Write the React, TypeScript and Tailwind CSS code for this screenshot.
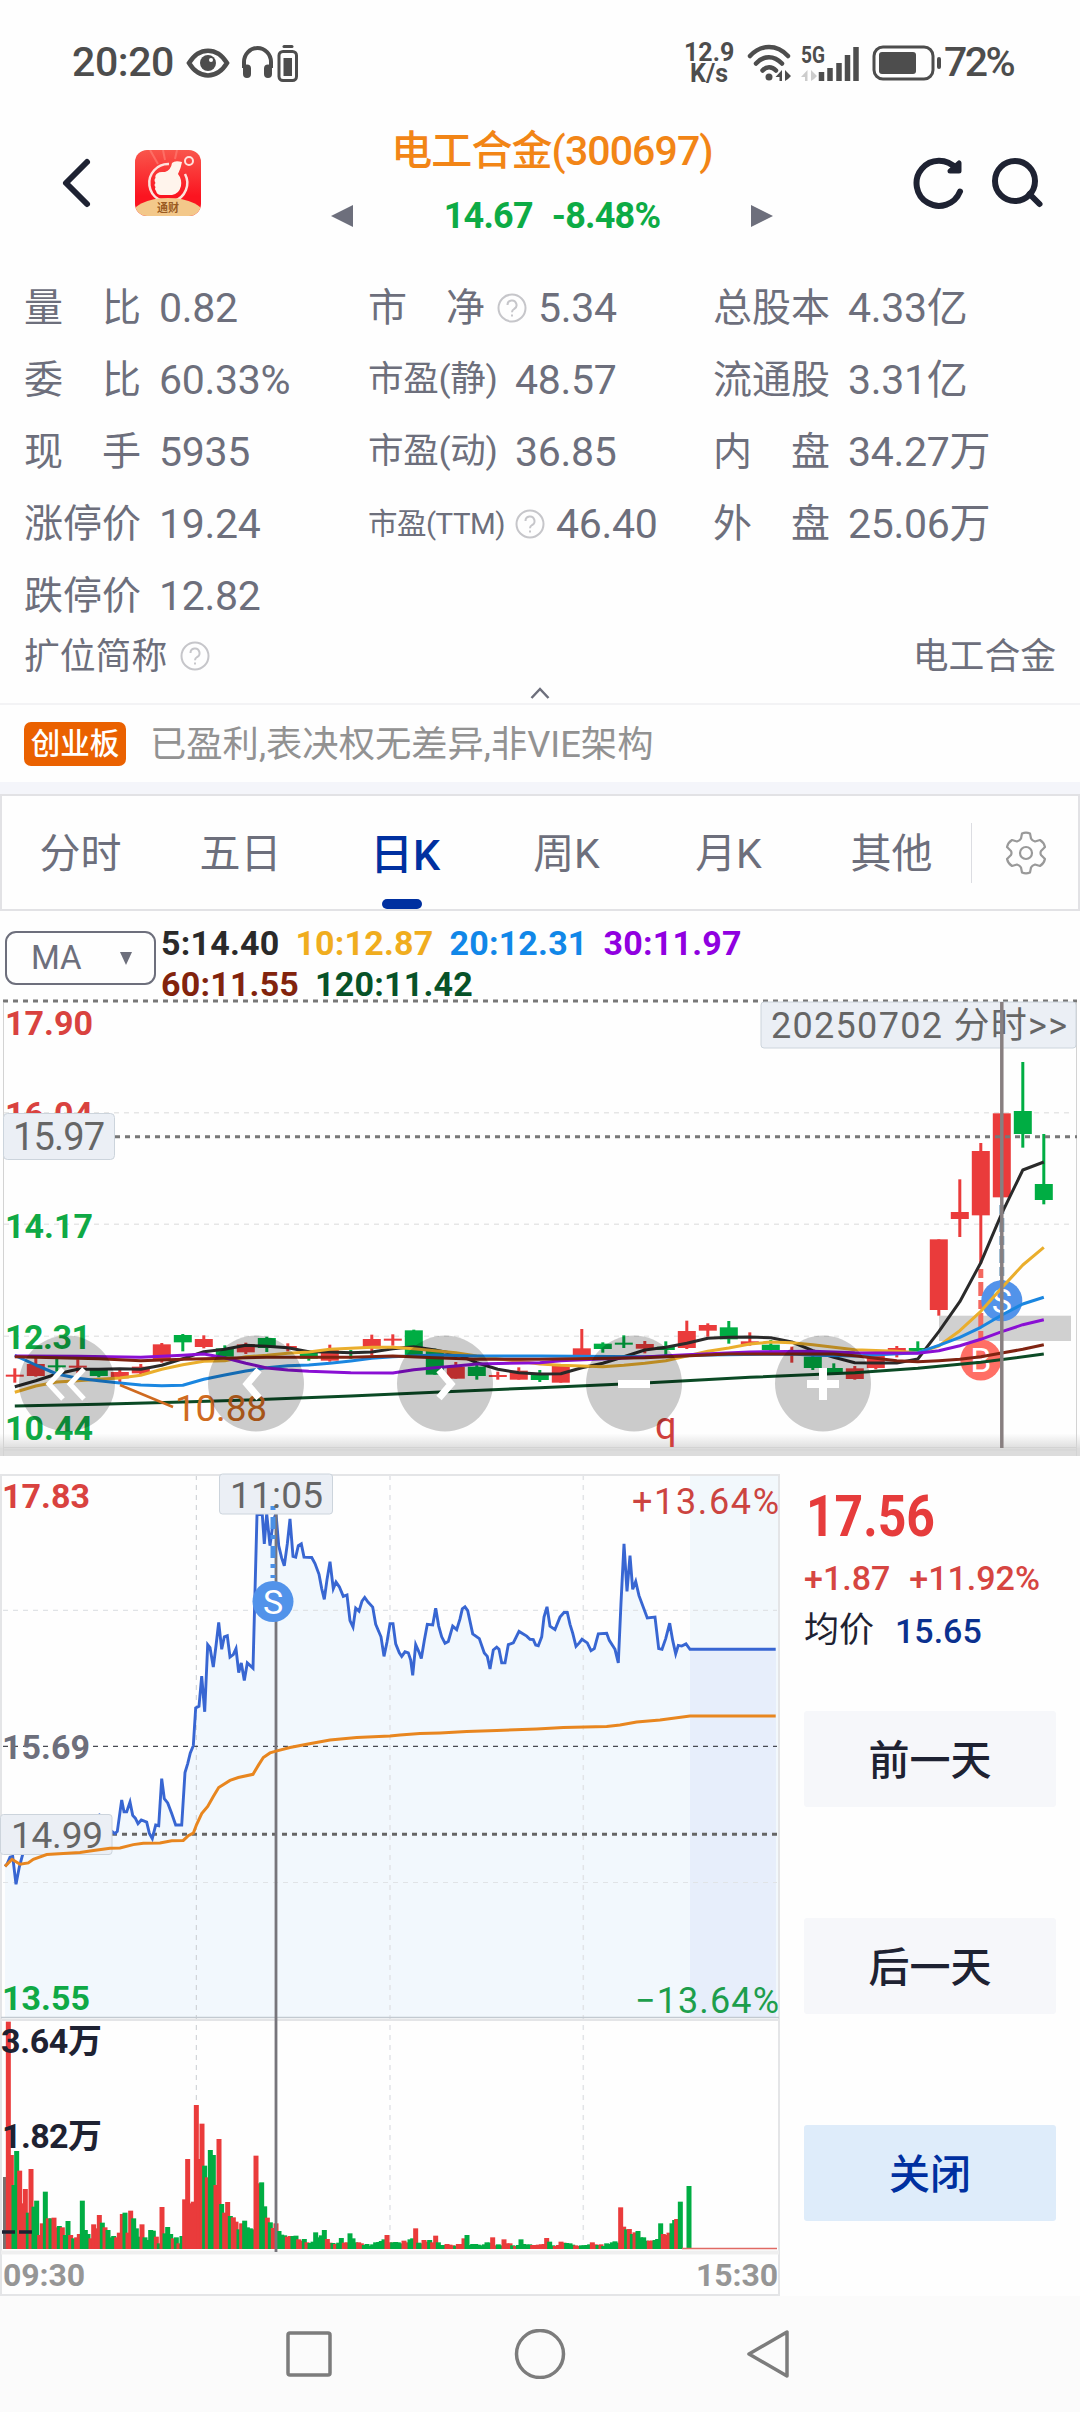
import type { ReactNode } from 'react'
import clsx from 'clsx'

const RED = '#ea3b3b'
const GREEN = '#00ad43'

interface StatItem {
  label: string
  value: string
  kind?: 'pe' | 'ttm'
  hint?: boolean
}

const stats: (StatItem | null)[] = [
  { label: '量比', value: '0.82' },
  { label: '市净', value: '5.34', hint: true },
  { label: '总股本', value: '4.33亿' },
  { label: '委比', value: '60.33%' },
  { label: '市盈(静)', value: '48.57', kind: 'pe' },
  { label: '流通股', value: '3.31亿' },
  { label: '现手', value: '5935' },
  { label: '市盈(动)', value: '36.85', kind: 'pe' },
  { label: '内盘', value: '34.27万' },
  { label: '涨停价', value: '19.24' },
  { label: '市盈(TTM)', value: '46.40', kind: 'ttm', hint: true },
  { label: '外盘', value: '25.06万' },
  { label: '跌停价', value: '12.82' },
  null,
  null,
]

const tabs = [
  { label: '分时', width: 'w-[157px]' },
  { label: '五日', width: 'w-[163px]' },
  { label: '日K', width: 'w-[166px]' },
  { label: '周K', width: 'w-[157px]' },
  { label: '月K', width: 'w-[167px]' },
  { label: '其他', width: 'w-[159px]' },
]

// Chart values are vertical positions, three units to a pixel.
// [colour, body top, body bottom, high, low]
type Candle = ['r' | 'g', number, number, number, number]

const candles: Candle[] = [
  ['r', 1154, 1160, 1135, 1178], ['r', 1122, 1158, 1100, 1160], ['g', 1126, 1132, 1106, 1145],
  ['r', 1127, 1133, 1108, 1150], ['g', 1140, 1158, 1138, 1162], ['r', 1146, 1165, 1140, 1180],
  ['r', 1130, 1150, 1122, 1152], ['r', 1063, 1108, 1059, 1118], ['g', 1035, 1057, 1032, 1084],
  ['r', 1047, 1071, 1036, 1075], ['g', 1075, 1100, 1066, 1104], ['r', 1063, 1087, 1058, 1092],
  ['g', 1044, 1074, 1040, 1086], ['r', 1068, 1074, 1060, 1084], ['g', 1085, 1106, 1080, 1112],
  ['r', 1080, 1112, 1064, 1115], ['g', 1085, 1092, 1080, 1106], ['r', 1047, 1075, 1034, 1096],
  ['r', 1046, 1052, 1033, 1067], ['g', 1021, 1095, 1019, 1095], ['g', 1080, 1154, 1076, 1154],
  ['r', 1130, 1166, 1116, 1166], ['g', 1130, 1158, 1124, 1169], ['r', 1155, 1161, 1145, 1169],
  ['r', 1142, 1169, 1132, 1169], ['g', 1155, 1170, 1140, 1176], ['r', 1128, 1178, 1128, 1178],
  ['r', 1075, 1100, 1017, 1100], ['g', 1061, 1077, 1057, 1088], ['g', 1058, 1064, 1036, 1074],
  ['r', 1062, 1076, 1053, 1090], ['g', 1070, 1080, 1054, 1095], ['r', 1023, 1074, 992, 1077],
  ['r', 1005, 1022, 1000, 1040], ['g', 1012, 1048, 993, 1061], ['r', 1054, 1062, 1027, 1067],
  ['g', 1064, 1080, 1050, 1082], ['r', 1086, 1094, 1070, 1118], ['g', 1100, 1134, 1095, 1140],
  ['g', 1134, 1152, 1120, 1155], ['r', 1135, 1167, 1128, 1169], ['r', 1088, 1134, 1088, 1138],
  ['r', 1074, 1084, 1068, 1102], ['g', 1074, 1084, 1054, 1090], ['r', 748, 960, 748, 977],
  ['r', 666, 687, 568, 741], ['r', 483, 676, 459, 820], ['r', 370, 622, 370, 622],
  ['g', 363, 432, 216, 473], ['g', 582, 630, 432, 643],
]

// candle index, position
const averages: { color: string; points: number[] }[] = [
  { color: '#2a2a2a', points: [0, 1190, 1, 1172, 2, 1152, 3, 1138, 4, 1138, 5, 1136, 6, 1138, 7, 1126, 8, 1106, 9, 1085, 10, 1078, 11, 1066, 12, 1069, 13, 1073, 14, 1085, 15, 1086, 16, 1088, 17, 1086, 18, 1076, 19, 1070, 20, 1080, 21, 1092, 22, 1118, 23, 1138, 24, 1148, 25, 1152, 26, 1151, 27, 1133, 28, 1120, 29, 1100, 30, 1080, 31, 1072, 32, 1060, 33, 1045, 34, 1042, 35, 1041, 36, 1043, 37, 1056, 38, 1082, 39, 1102, 40, 1118, 41, 1119, 42, 1119, 43, 1107, 44, 1025, 45, 935, 46, 818, 47, 670, 48, 540, 49, 516] },
  { color: '#eaae2c', points: [0, 1207, 1, 1188, 2, 1176, 3, 1172, 4, 1168, 5, 1164, 6, 1156, 7, 1138, 8, 1124, 9, 1114, 10, 1112, 11, 1100, 12, 1096, 13, 1090, 14, 1086, 15, 1078, 16, 1075, 17, 1072, 18, 1072, 19, 1076, 20, 1082, 21, 1088, 22, 1098, 23, 1106, 24, 1114, 25, 1122, 26, 1126, 28, 1130, 29, 1126, 30, 1120, 31, 1112, 32, 1098, 33, 1084, 34, 1074, 35, 1062, 36, 1056, 37, 1058, 38, 1064, 39, 1072, 40, 1079, 42, 1084, 43, 1088, 44, 1068, 45, 1022, 46, 964, 47, 893, 48, 825, 49, 772] },
  { color: '#1a86e0', points: [0, 1096, 1, 1125, 2, 1152, 3, 1165, 4, 1172, 5, 1179, 6, 1185, 7, 1187, 8, 1186, 9, 1168, 10, 1155, 11, 1143, 12, 1133, 13, 1127, 14, 1125, 15, 1120, 16, 1113, 17, 1105, 18, 1100, 20, 1095, 22, 1098, 25, 1098, 30, 1100, 33, 1095, 37, 1092, 38, 1096, 40, 1098, 43, 1088, 44, 1066, 45, 1042, 46, 1012, 47, 975, 48, 942, 49, 922] },
  { color: '#8a0fd4', points: [0, 1098, 3, 1099, 6, 1102, 8, 1096, 9, 1092, 10, 1103, 11, 1120, 12, 1134, 13, 1140, 14, 1144, 16, 1148, 18, 1149, 19, 1139, 20, 1133, 21, 1128, 22, 1122, 25, 1118, 26, 1112, 29, 1104, 32, 1094, 35, 1086, 38, 1084, 40, 1088, 43, 1090, 44, 1082, 45, 1067, 46, 1048, 47, 1025, 48, 1004, 49, 989] },
  { color: '#7f2311', points: [0, 1100, 4, 1106, 6, 1112, 8, 1108, 12, 1102, 16, 1102, 18, 1098, 20, 1103, 22, 1108, 25, 1108, 30, 1103, 34, 1092, 39, 1092, 40, 1097, 41, 1105, 42, 1112, 43, 1115, 44, 1112, 45, 1108, 46, 1100, 47, 1089, 48, 1078, 49, 1064] },
  { color: '#0b4a25', points: [0, 1248, 4, 1243, 8, 1236, 12, 1228, 16, 1218, 20, 1207, 25, 1193, 30, 1179, 35, 1162, 40, 1148, 43, 1135, 46, 1117, 49, 1092] },
]

const price = [
  15, 1138, 22, 1130, 30, 1112, 38, 1110, 48, 1188, 58, 1140, 68, 1104, 90, 1070, 130, 1050, 200, 1030, 298, 994, 320, 1030, 336, 1040, 345, 1046, 352, 1040, 358, 1000, 365, 952, 372, 985, 380, 985, 390, 958, 398, 995, 406, 1003, 414, 1018, 424, 1008, 440, 1014, 448, 1045, 457, 1060, 467, 1022, 476, 1024, 485, 892, 493, 948, 503, 960, 515, 990, 527, 1022, 545, 1022, 555, 875, 563, 850, 571, 820, 580, 800, 587, 694, 597, 690, 605, 605, 614, 705, 623, 517, 630, 525, 640, 580, 648, 520, 656, 455, 665, 530, 673, 495, 682, 492, 690, 552, 700, 545, 708, 528, 716, 595, 724, 568, 733, 617, 742, 568, 750, 575, 759, 583, 764, 400, 771, 153, 787, 153, 793, 235, 800, 150, 810, 240, 820, 170, 828, 150, 836, 240, 845, 275, 853, 296, 862, 235, 870, 165, 879, 270, 887, 272, 895, 240, 904, 235, 912, 272, 935, 273, 945, 290, 957, 320, 965, 360, 973, 390, 981, 335, 990, 285, 1000, 360, 1008, 342, 1018, 355, 1030, 382, 1041, 378, 1050, 450, 1059, 468, 1067, 415, 1077, 423, 1086, 395, 1094, 385, 1104, 398, 1118, 412, 1127, 460, 1143, 495, 1152, 550, 1161, 510, 1170, 458, 1179, 458, 1187, 515,
  1198, 540, 1205, 550, 1215, 537, 1225, 540, 1232, 560, 1238, 603, 1247, 517, 1257, 538, 1264, 556, 1273, 505, 1282, 460, 1298, 462, 1307, 415, 1316, 465, 1325, 495, 1335, 513, 1345, 508, 1358, 465, 1370, 475, 1380, 445, 1387, 417, 1395, 411, 1403, 422, 1418, 487, 1438, 500, 1453, 540, 1462, 550, 1470, 585, 1480, 532, 1490, 524, 1497, 530, 1505, 568, 1515, 568, 1525, 517, 1540, 512, 1557, 480, 1580, 493, 1590, 502, 1600, 503, 1607, 518, 1615, 520, 1625, 495, 1632, 440, 1641, 411, 1650, 465, 1665, 475, 1680, 440, 1692, 427, 1702, 427, 1710, 460, 1718, 485, 1728, 522, 1738, 512, 1746, 502, 1762, 512, 1773, 534, 1783, 528, 1795, 487, 1820, 485, 1828, 505, 1845, 530, 1855, 568, 1863, 400, 1872, 235, 1881, 368, 1890, 268, 1898, 362, 1907, 340, 1917, 380, 1942, 442, 1965, 440, 1976, 528, 1986, 530, 1997, 500, 2009, 457, 2018, 505, 2027, 543, 2035, 519, 2045, 521, 2058, 515, 2070, 530, 2327, 530,
]

const average = [
  15, 1138, 36, 1118, 60, 1132, 85, 1128, 100, 1118, 140, 1105, 190, 1102, 240, 1099, 270, 1095, 330, 1087, 360, 1086, 400, 1077, 430, 1073, 480, 1072, 515, 1066, 550, 1065, 565, 1052, 580, 1045, 590, 1020, 605, 990, 623, 970, 640, 942, 656, 917, 690, 897, 715, 889, 759, 880, 775, 855, 790, 833, 810, 820, 828, 815, 870, 805, 920, 796, 990, 784, 1070, 777, 1170, 773, 1200, 770, 1260, 766, 1320, 764, 1400, 760, 1490, 757, 1610, 753, 1690, 749, 1820, 746, 1860, 742, 1910, 734, 1980, 728, 2070, 717, 2327, 717,
]

// Minute volumes: x, bar height, then r for a rising and g for a falling minute
const volume =
  '25,682r 34,282r 42,192g 50,294g 59,235r 68,137r 76,180r 85,109g 93,240r 102,127g 110,145g 119,42r 127,77r 136,172g 145,92r 153,92g 162,94r 170,65r 178,69g 187,65r 196,42g 204,84g 212,42r 221,32g 230,35r 238,45r 247,145g 256,57g 264,45g 273,32r 281,74r 290,62r 298,102r 307,79g 315,65r 324,57g 333,35g 341,39g 350,35r 358,49r 367,105r 375,109g 384,49r 392,115r 401,92g 409,62g 418,37g 426,74r 435,35g 444,27g 452,57g 460,55g 469,37r 478,17g 486,126r 495,47g 503,66g 512,45g 520,32r 529,35g 537,17r 546,39g 554,149r 563,270r 571,137r 580,142r 589,432r 597,270r 606,376r 614,250g 622,215r 631,297g 640,282g 648,192r 657,330r 665,135g 674,109r 683,141r 691,99g 700,95r 708,82r 717,59g 725,77r 734,85g 742,65g 751,62g 760,59g 768,280r 777,197r 785,200g 794,128g 802,94r 811,80g 820,63r 828,77r 837,54g 845,43g 854,41g 862,37r 871,39r 879,39g 888,40g 896,29r 905,25r 913,30g 921,20r 930,18g 939,22g 947,50g 956,35g 964,41g 973,57g 982,30r 990,19r 999,18g 1007,15r 1016,19g 1024,33g 1033,19r 1041,20r 1050,47g 1059,32g 1067,20g 1076,20r 1084,17r 1093,12g 1101,15g 1110,10g 1118,14g 1127,20g 1136,21g 1144,24g 1152,29g 1161,42r 1170,20r 1178,20g 1187,21g 1195,20g 1204,17g 1212,25r 1221,20r 1230,29g 1238,32g 1247,62r 1256,19g 1264,17g 1272,27r 1281,22r 1289,27g 1298,20r 1307,40r 1315,20g 1324,12g 1332,12g 1341,15r 1350,13r 1358,11r 1367,10g 1375,15r 1384,15r 1392,32r 1401,42g 1410,12g 1418,15g 1427,15g 1435,13g 1444,11g 1453,14g 1461,20g 1470,19g 1478,35r 1487,11r 1495,14g 1504,11g 1512,29r 1521,17r 1530,17r 1538,11g 1547,9r 1555,12g 1563,29g 1572,15g 1580,13g 1589,14g 1598,12r 1606,12r 1615,13r 1624,14r 1632,15r 1640,33r 1649,22g 1658,11g 1666,9r 1675,12r 1683,22r 1692,19r 1700,18g 1710,17g 1718,13g 1727,11r 1735,9r 1744,11g 1752,11g 1760,12g 1769,14g 1777,20r 1786,14r 1794,12g 1803,14r 1811,9g 1820,17g 1828,15g 1837,20g 1845,23g 1854,19g 1862,125r 1871,67r 1880,59g 1888,60r 1897,45g 1905,50r 1914,54g 1922,35g 1931,35g 1939,25g 1948,25r 1957,25r 1965,27g 1973,30g 1982,77g 1990,45r 1999,42r 2007,49r 2016,77g 2024,87g 2030,90r 2041,142g 2067,189g'
    .split(' ')
    .map((entry) => {
      const [x, h] = entry.slice(0, -1).split(',').map(Number)
      return { x: x / 3, h: h / 3, color: entry.endsWith('r') ? RED : GREEN }
    })

const candleX = (i: number) => 14.8 + i * 21

function toPath(values: number[], x: (v: number) => number, y: (v: number) => number) {
  const parts: string[] = []
  for (let i = 0; i < values.length; i += 2) {
    parts.push(`${x(values[i]).toFixed(1)},${y(values[i + 1]).toFixed(1)}`)
  }
  return 'M' + parts.join('L')
}

interface LabelProps {
  x: number
  y: number
  width: number
  fill: string
  size?: number
  weight?: number
  children: ReactNode
}

function Label({ x, y, width, fill, size = 34, weight = 700, children }: LabelProps) {
  return (
    <text x={x} y={y} fill={fill} fontSize={size} fontWeight={weight} textLength={width}>
      {children}
    </text>
  )
}

function HintIcon() {
  return (
    <svg width="30" height="30" viewBox="0 0 30 30" fill="none" stroke="#c6c6ca" strokeWidth="2" className="shrink-0">
      <circle cx="15" cy="15" r="13.5" />
      <path d="M10.500 12a4.500 4.500 0 1 1 6.600 4c-1.600 1-2.100 1.600-2.100 3.200" />
      <path d="M15 21.500v2" />
    </svg>
  )
}

function Stat({ label, value, kind, hint }: StatItem) {
  return (
    <div className="flex h-[72px] items-center">
      {kind ? (
        <span
          className={clsx(
            'whitespace-nowrap',
            kind === 'pe' ? 'w-[147px] text-[35.500px] tracking-[-0.300px]' : 'w-[147px] text-[29.500px] tracking-[-0.500px]',
          )}
        >
          {label}
        </span>
      ) : (
        <span className={clsx('flex w-[117px] justify-between text-[39px]', !hint && 'mr-[18px]')}>
          {label.split('').map((char) => (
            <span key={char}>{char}</span>
          ))}
        </span>
      )}
      {hint && (
        <span className={kind ? 'mr-[11px]' : 'mr-[11px] ml-[12px]'}>
          <HintIcon />
        </span>
      )}
      <span className="pt-[2px] text-[41px] tracking-[-0.300px] whitespace-nowrap">{value}</span>
    </div>
  )
}

function StatusBar() {
  return (
    <div className="flex h-[126px] items-start justify-between pt-[38px] pr-[65px] pl-[72px] text-[#4d4d4d]">
      <div className="flex h-[50px] items-center">
        <span className="w-[114px] text-[41px] font-medium tracking-[-0.400px]">20:20</span>
        <svg width="44" height="30" viewBox="0 0 44 30" className="mr-[10px]">
          <path d="M3 15C13-1.500 31-1.500 41 15C31 31.500 13 31.500 3 15Z" fill="none" stroke="currentColor" strokeWidth="4.500" />
          <circle cx="22" cy="15" r="8" fill="currentColor" />
          <circle cx="25" cy="12" r="2" fill="#fff" />
        </svg>
        <svg width="58" height="38" viewBox="0 0 58 38" fill="none" stroke="currentColor">
          <path d="M4 24V18a13.500 14 0 0 1 27 0v6" strokeWidth="4" />
          <path d="M7 24.500v5.500M28 24.500v5.500" strokeWidth="8" strokeLinecap="round" />
          <rect x="39" y="7.500" width="17.500" height="29" rx="4" strokeWidth="3" />
          <path d="M44 2.500h8" strokeWidth="3" strokeLinecap="round" />
          <path d="M43.500 14h8.500v18h-8.500z" fill="currentColor" stroke="none" />
        </svg>
      </div>
      <div className="flex h-[50px] items-center">
        <div className="mr-[13px] w-[50px] text-center text-[25px] leading-[21px] font-bold">
          <div>12.9</div>
          <div>K/s</div>
        </div>
        <svg width="112" height="38" viewBox="746 43 112 38" fill="none" stroke="currentColor">
          <path d="M749 55C760 43 776 43 787 55M755 62.500C763 54 773 54 781 62.500M761.500 69.500C765 65 771 65 775 69.500" strokeWidth="4.500" strokeLinecap="round" />
          <circle cx="768" cy="76" r="3.500" fill="currentColor" stroke="none" />
          <path d="M781 69v11h-2.500v-4h-4zM784 80V69l6 6-3 3z" fill="currentColor" stroke="none" />
          <text x="800" y="62" fontSize="23" fontWeight="700" textLength="24" lengthAdjust="spacingAndGlyphs" fill="currentColor" stroke="none">5G</text>
          <path d="M806.500 69v11h-2.500v-4h-4zM810 80V69l6 6-3 3z" fill="#ccc" stroke="none" />
          <path d="M820.500 80v-9M829 80V67M838 80V62M846.500 80V54M855 80V46" strokeWidth="5.500" />
        </svg>
        <svg width="72" height="36" viewBox="871 44 72 36" fill="none" stroke="currentColor" className="ml-[13px]">
          <rect x="873" y="46" width="59" height="32" rx="9" strokeWidth="3" />
          <rect x="878" y="51" width="37" height="22" rx="3" fill="currentColor" stroke="none" />
          <path d="M938 58v8" strokeWidth="4" strokeLinecap="round" />
        </svg>
        <span className="w-[71px] text-[41px] font-medium tracking-[-2.500px]">72%</span>
      </div>
    </div>
  )
}

function AppLogo() {
  return (
    <svg width="66" height="66" viewBox="0 0 66 66">
      <defs>
        <linearGradient id="logoRed" x1="0" y1="0" x2="0" y2="1">
          <stop offset="0" stopColor="#f9564c" />
          <stop offset="0.700" stopColor="#fb1420" />
        </linearGradient>
        <clipPath id="logoClip">
          <rect width="66" height="66" rx="12" />
        </clipPath>
      </defs>
      <g clipPath="url(#logoClip)">
        <rect width="66" height="66" fill="url(#logoRed)" />
        <path d="M15 0l8 14M28 0l2 10M42 0l-2 9" stroke="#ff8378" strokeWidth="2" opacity="0.600" />
        <path d="M34 14A19 19 0 1 0 50 24" fill="none" stroke="#fde3dd" strokeWidth="2.500" />
        <ellipse cx="33" cy="66" rx="37" ry="18" fill="#f3c88a" />
        <path d="M23 23q1-1 4-1h3q6-2 7-9q3-3 10-1q-1 6-4 12q4 5 3 12q-2 8-9 9h-11q-4 0-5-4q-2-2-.500-4q-2-2 0-4q-2-3 0-5q-1-3 2.500-5z" fill="#fff4ec" />
        <circle cx="54" cy="11" r="4" fill="none" stroke="#ffe1dc" strokeWidth="2" />
        <text x="22" y="62" fontSize="11" fontWeight="700" fill="#9a5b22">通财</text>
      </g>
    </svg>
  )
}

function Header() {
  return (
    <header className="flex h-[146px] items-start pl-[61px] text-[#1e2232]">
      <svg width="32" height="54" viewBox="0 0 32 54" fill="none" stroke="currentColor" strokeWidth="6" strokeLinecap="round" strokeLinejoin="round" className="mt-[30px] mr-[42px]">
        <path d="M26 6L5 27l21 21" />
      </svg>
      <div className="mt-[24px]">
        <AppLogo />
      </div>
      <div className="ml-[119px] flex w-[464px] flex-col items-center">
        <h1 className="h-[56px] text-[41px] leading-[50px] font-medium tracking-[-0.900px] whitespace-nowrap text-[#f28516]">电工合金(300697)</h1>
        <div className="flex h-[64px] w-[442px] items-center justify-between text-[#6d6f7c]">
          <svg width="22" height="22" viewBox="0 0 22 22" fill="currentColor" className="mt-[4px]">
            <path d="M22 0v22L0 11z" />
          </svg>
          <p className="mt-[3px] flex gap-[19px] text-[36px] font-bold tracking-[-0.800px] text-[#0dab45]">
            <span>14.67</span>
            <span>-8.48%</span>
          </p>
          <svg width="22" height="22" viewBox="0 0 22 22" fill="currentColor" className="mt-[4px]">
            <path d="M0 0v22l22-11z" />
          </svg>
        </div>
      </div>
      <svg width="132" height="54" viewBox="912 156 132 54" fill="none" stroke="currentColor" strokeWidth="6" strokeLinecap="round" strokeLinejoin="round" className="mt-[30px] ml-[128px]">
        <path d="M960 191.500A22.500 22.500 0 1 1 956 168.500" />
        <path d="M959 163v8h-9z" fill="currentColor" strokeWidth="5" />
        <circle cx="1015" cy="181" r="20" />
        <path d="M1029.500 194l10 10" />
      </svg>
    </header>
  )
}

const gearPath =
  'M18 2.500q4-1.800 8 0l1 5q1 2 4 3l5-1.500q4 2.500 5 7l-4 4q-1 2 0 4l4 4q-1 4.500-5 7l-5-1.500q-3 1-4 3l-1 5q-4 1.800-8 0l-1-5q-1-2-4-3l-5 1.500q-4-2.500-5-7l4-4q1-2 0-4l-4-4q1-4.500 5-7l5 1.500q3-1 4-3z'

function PeriodTabs() {
  return (
    <nav className="flex h-[117px] items-center border-2 border-[#e2e2e5] text-[#6d6f7c]">
      {tabs.map((tab) => (
        <button
          key={tab.label}
          className={clsx(
            'relative flex h-full items-center justify-center pt-[5px] text-[41px]',
            tab.width,
            tab.label === '日K' && 'text-[43px] font-medium text-[#0030a0]',
          )}
        >
          {tab.label}
          {tab.label === '日K' && (
            <span className="absolute bottom-0 left-[60px] h-[10px] w-[40px] rounded-full bg-[#0030a0]" />
          )}
        </button>
      ))}
      <span className="h-[60px] w-px bg-[#dcdde2]" />
      <svg width="44" height="44" viewBox="0 0 44 44" fill="none" stroke="#999" strokeWidth="2.200" strokeLinejoin="round" className="ml-[32px]">
        <path d={gearPath} />
        <circle cx="22" cy="22" r="6" />
      </svg>
    </nav>
  )
}

function AverageLegend() {
  return (
    <div className="flex h-[79px] items-start pl-[5px]">
      <button className="mt-[20px] flex h-[54px] w-[151px] items-center justify-between rounded-[11px] border-2 border-[#6d6f7c] pr-[22px] pl-[24px] text-[33px] text-[#6d6f7c]">
        MA
        <svg width="12" height="13" viewBox="0 0 12 13" fill="currentColor">
          <path d="M0 0h12L6 13z" />
        </svg>
      </button>
      <div className="mt-[12px] ml-[5px] text-[34px] leading-[41px] font-bold tracking-[0.200px]">
        <div className="flex gap-[16px]">
          <span className="text-[#2a2a2a]">5:14.40</span>
          <span className="text-[#f0ad1e]">10:12.87</span>
          <span className="text-[#1187e8]">20:12.31</span>
          <span className="text-[#9000e0]">30:11.97</span>
        </div>
        <div className="flex gap-[16px]">
          <span className="text-[#82230d]">60:11.55</span>
          <span className="text-[#075228]">120:11.42</span>
        </div>
      </div>
    </div>
  )
}

function TradeMark({ x, y, color, children }: { x: number; y: number; color: string; children: ReactNode }) {
  return (
    <>
      <circle cx={x} cy={y} r="20.500" fill={color} />
      <text x={x} y={y + 12} textAnchor="middle" fontSize="34" fill="#fff">
        {children}
      </text>
    </>
  )
}

function CandleChart() {
  const y = (v: number) => v / 3 - 1

  return (
    <svg width="1080" height="466" viewBox="0 -1 1080 466" className="block">
      <defs>
        <linearGradient id="fade" x1="0" y1="0" x2="0" y2="1">
          <stop offset="0" stopColor="#fff" />
          <stop offset="1" stopColor="#dedede" />
        </linearGradient>
      </defs>
      <rect x="0" y="442" width="1080" height="15" fill="url(#fade)" />
      <rect x="0" y="457" width="1080" height="8" fill="#dcdcdc" />
      <path d="M3.500 12V465M1076.500 12V465M3 456.500H1077M3 459H1077" stroke="#d3d3d3" strokeWidth="1" fill="none" />
      <path d="M4 121.700H1072M4 233.300H1072M4 345.300H1072" stroke="#e6e6e6" strokeWidth="1.500" strokeDasharray="5 5" />
      <rect x="939" y="324.700" width="132" height="25.300" fill="#d0d0d0" />

      <Label x={5} y={43.500} width={88} fill="#d9423f">17.90</Label>
      <Label x={5} y={134.500} width={88} fill="#d9423f">16.04</Label>
      <Label x={5} y={246.500} width={88} fill="#0fa945">14.17</Label>
      <Label x={5} y={357.500} width={86} fill="#0fa945">12.31</Label>
      <Label x={5} y={448.500} width={88} fill="#0fa945">10.44</Label>

      {candles.map(([color, top, bottom, high, low], i) => (
        <g key={i} fill={color === 'r' ? RED : GREEN}>
          <rect x={candleX(i) - 1.500} y={y(high)} width="3" height={(low - high) / 3} />
          <rect x={candleX(i) - 9} y={y(top)} width="18" height={(bottom - top) / 3} />
        </g>
      ))}

      <path d="M980.800 278V350" stroke="#f4685f" strokeWidth="5" strokeDasharray="9 4 14 4" />
      <path d="M1001.800 214V290" stroke="#79a0bd" strokeWidth="5" strokeDasharray="9 4 14 4" />
      <TradeMark x={980.800} y={369} color="#ff6f65">B</TradeMark>
      <TradeMark x={1001.800} y={309.700} color="#5293ea">S</TradeMark>

      {averages.map((line) => (
        <path key={line.color} d={toPath(line.points, candleX, y)} fill="none" stroke={line.color} strokeWidth="3" strokeLinejoin="round" />
      ))}

      <path d="M120 394L173 416" stroke="#cf6a20" strokeWidth="2.500" />
      <Label x={175} y={430} width={92} size={37} weight={400} fill="#cf6a20">10.88</Label>
      <text x="655" y="448" fontSize="38" fill="#cf3f3c">q</text>

      {/* pan and zoom controls */}
      {[67, 256, 445, 634, 823].map((cx) => (
        <circle key={cx} cx={cx} cy="392.500" r="48" fill="#000" fillOpacity="0.200" />
      ))}
      <g fill="none" stroke="#fff" strokeWidth="5">
        <path d="M63 378L49 393l14 15M84 378L70 393l14 15" />
        <path d="M259 379L247 393l12 14M439 379l12 14-12 14" strokeWidth="7" />
        <path d="M618 393h32M807 393h32M823 377v32" strokeWidth="8" />
      </g>

      <path d="M3 10H1077M115 145.700H1077" stroke="#777" strokeWidth="3" strokeDasharray="5 5" />
      <rect x="761" y="11" width="315" height="46" rx="3" fill="#ebeff5" stroke="#ccd4dc" />
      <Label x={771} y={46.500} width={296} size={36} weight={400} fill="#666">{'20250702 分时>>'}</Label>
      <rect x="3.500" y="122.500" width="111" height="46" rx="4" fill="#ebeff5" stroke="#ccd4dc" />
      <Label x={13} y={159} width={92} size={38} weight={400} fill="#666">15.97</Label>
      <path d="M1001.800 11V457" stroke="#887f80" strokeWidth="3.500" />
    </svg>
  )
}

function MinuteChart() {
  const x = (v: number) => v / 3
  const y = (v: number) => v / 2.8 + 4
  const line = toPath(price, x, y)

  return (
    <svg width="780" height="840" viewBox="0 0 780 840" className="block shrink-0">
      <rect x="690" y="19" width="89" height="543" fill="#f2f8fc" />
      <path d={`${line}V561H5Z`} fill="#f2f8fd" />
      <rect x="690" y="193.300" width="86" height="368" fill="#e7eefb" />
      <path d="M196.300 19V793" stroke="#c9ccd0" strokeWidth="1" strokeDasharray="5 5" />
      <path d="M390 19V793M583.300 19V793" stroke="#e2e4e7" strokeWidth="1.500" strokeDasharray="5 5" />
      <path d="M3 154.400H777M3 426.500H777" stroke="#e0e3e6" strokeWidth="1.200" strokeDasharray="5 5" />
      <path d="M1 840V19H779V839H1M1 564H779" fill="none" stroke="#e4e5e7" strokeWidth="2" />
      <path d="M1 561.500H779" stroke="#c3cad1" strokeWidth="1.500" />
      <path d="M1 796.500H779" stroke="#efefef" strokeWidth="4" />

      <rect x="3" y="721" width="4" height="72" fill="#77706f" />
      {volume.map((bar) => (
        <rect key={bar.x} x={bar.x - 2.500} y={793 - bar.h} width="5" height={bar.h} fill={bar.color} />
      ))}
      <path d="M682 792.500H777" stroke="#e06a64" strokeWidth="1.500" />

      <path d="M3 290.400H777" stroke="#474a52" strokeWidth="1.300" strokeDasharray="5 5" />
      <path d="M112 378.300H779" stroke="#666" strokeWidth="3" strokeDasharray="5 5" />
      <path d={line} fill="none" stroke="#3866d2" strokeWidth="2.900" />
      <path d="M276 20V796" stroke="#77757b" strokeWidth="2.800" />
      <rect x="219.500" y="18" width="113" height="40" rx="3" fill="#ebeff5" stroke="#ccd4dc" />
      <path d="M273 50V122" stroke="#4a90e6" strokeWidth="5" strokeDasharray="4 7 12 6" />
      <TradeMark x={273} y={145.500} color="#5293ea">S</TradeMark>
      <rect x="0.500" y="358.500" width="111.500" height="40" rx="3" fill="#ebeff5" stroke="#ccd4dc" />
      <Label x={11} y={392} width={92} size={37} weight={400} fill="#666">14.99</Label>
      <path d={toPath(average, x, y)} fill="none" stroke="#e8861f" strokeWidth="3" />
      <Label x={230} y={51.500} width={93} size={37} weight={400} fill="#666">11:05</Label>

      <Label x={2} y={51.500} width={88} fill="#d9423f">17.83</Label>
      <Label x={2} y={302.500} width={88} fill="#6d6f7c">15.69</Label>
      <Label x={2} y={554} width={88} fill="#0fa945">13.55</Label>
      <Label x={632} y={57.500} width={147} size={36} weight={400} fill="#cc4440">+13.64%</Label>
      <Label x={635} y={556.500} width={144} size={36} weight={400} fill="#1d9e4c">−13.64%</Label>
      <Label x={1} y={597} width={101} fill="#1e2232">3.64万</Label>
      <Label x={2} y={691.500} width={100} fill="#1e2232">1.82万</Label>
      <path d="M2 776H15M19 776H32" stroke="#1e2232" strokeWidth="3.500" />
      <Label x={3} y={830} width={82} size={32} fill="#969696">09:30</Label>
      <Label x={696} y={830} width={82} size={32} fill="#969696">15:30</Label>
    </svg>
  )
}

const buttonClass = 'h-[96px] w-full rounded-[3px] pt-[5px] text-[41px] font-medium'

function DayPanel() {
  return (
    <aside className="flex flex-col pt-[30px] pl-[24px] text-[#1e2232]">
      <div className="ml-[2px] h-[64px] w-[150px] origin-left scale-x-[0.860] text-[58px] leading-[60px] font-bold text-[#e63c3c]">17.56</div>
      <div className="flex h-[56px] items-center gap-[19px] text-[34px] font-medium whitespace-nowrap text-[#d64541]">
        <span>+1.87</span>
        <span>+11.92%</span>
      </div>
      <div className="flex h-[50px] items-center gap-[21px] text-[35px]">
        <span className="w-[70px]">均价</span>
        <span className="text-[34px] font-medium text-[#0b318f]">15.65</span>
      </div>
      <div className="mt-[55px] flex w-[252px] flex-col gap-[111px]">
        <button className={clsx(buttonClass, 'bg-[#f6f7fa]')}>前一天</button>
        <button className={clsx(buttonClass, 'bg-[#f6f7fa]')}>后一天</button>
        <button className={clsx(buttonClass, 'bg-[#deecfa] text-[#0030a0]')}>关闭</button>
      </div>
    </aside>
  )
}

export default function App() {
  return (
    <div className="h-[2412px] w-[1080px] overflow-hidden bg-[#fefefe] font-[Roboto,'Noto_Sans_CJK_SC',sans-serif]">
      <StatusBar />
      <Header />

      <section className="h-[433px] border-b-2 border-[#f3f3f5] text-[#6d6f7c]">
        <div className="grid grid-cols-[344px_345px_1fr] pl-[24px]">
          {stats.map((item, i) => (item ? <Stat key={item.label} {...item} /> : <span key={i} />))}
        </div>
        <div className="flex h-[48px] items-center pr-[24px] pl-[24px] text-[35.800px]">
          <span className="mt-[4px] mr-[13px]">扩位简称</span>
          <HintIcon />
          <span className="mt-[4px] ml-auto">电工合金</span>
        </div>
        <svg width="20" height="12" viewBox="0 0 20 12" fill="none" stroke="#6d6f7c" strokeWidth="2.500" className="mx-auto mt-[7px]">
          <path d="M1.500 11L10 2l8.500 9" />
        </svg>
      </section>

      <section className="flex h-[77px] items-center pl-[24px]">
        <span className="flex h-[44px] w-[102px] items-center justify-center rounded-[7px] bg-[#ea6100] pt-[2px] text-[29.500px] font-medium text-white">创业板</span>
        <span className="mt-[4px] ml-[24px] text-[36.300px] text-[#929292]">已盈利,表决权无差异,非VIE架构</span>
      </section>
      <div className="h-[12px] bg-[#f4f5fa]" />

      <PeriodTabs />
      <AverageLegend />
      <CandleChart />

      <div className="flex h-[840px]">
        <MinuteChart />
        <DayPanel />
      </div>

      <footer className="flex h-[116px] justify-center bg-[#fbfbfb] pt-[33px]">
        <svg width="508" height="50" viewBox="1 0 508 50" fill="none" stroke="#7c7c7c" strokeWidth="3.500" strokeLinejoin="round">
          <rect x="3" y="4" width="42" height="42" rx="2" />
          <circle cx="255" cy="25" r="23.500" />
          <path d="M502 3v44L464 25z" />
        </svg>
      </footer>
    </div>
  )
}
